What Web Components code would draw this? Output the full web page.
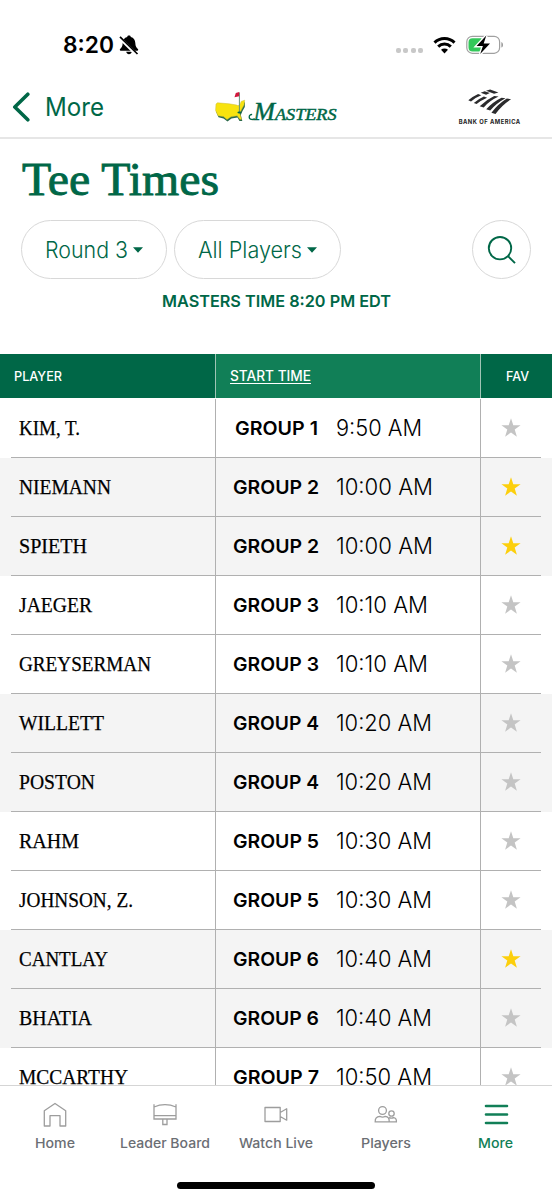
<!DOCTYPE html>
<html lang="en">
<head>
<meta charset="utf-8">
<title>Tee Times</title>
<style>
  :root {
    --green: #006747;
    --greenLight: #117f57;
    --line: #b0b0b0;
    --sans: Inter, "Liberation Sans", sans-serif;
    --serif: "Liberation Serif", serif;
  }
  body { margin: 0; background: #fff; }
</style>
</head>
<body>
<tee-times-app></tee-times-app>

<script>
// Base class: puts the template of the element in an open shadow root
class BaseElement extends HTMLElement {
  constructor() {
    super()
    this.attachShadow({ mode: 'open' })
  }
  connectedCallback() {
    if (this.shadowRoot.childNodes.length) return
    const template = document.createElement('template')
    template.innerHTML = this.getTemplate()
    this.shadowRoot.append(template.content.cloneNode(true))
    this.ready()
  }
  ready() {}
}

// One line of text, squeezed or stretched to the width attribute
class FitText extends BaseElement {
  getTemplate() {
    return /*html*/`
      <style>
        :host { display: block; flex: none; white-space: nowrap; }
        span { display: inline-block; transform-origin: 0 50%; }
      </style>
      <span><slot></slot></span>
    `
  }
  ready() {
    const width = Number(this.getAttribute('width'))
    const span = this.shadowRoot.querySelector('span')
    const natural = span.getBoundingClientRect().width
    this.style.width = width + 'px'
    if (natural) span.style.transform = `scaleX(${width / natural})`
  }
}
customElements.define('fit-text', FitText)

class StatusBar extends BaseElement {
  getTemplate() {
    return /*html*/`
      <style>
        :host {
          display: flex; align-items: center; box-sizing: border-box;
          height: 76px; padding: 14px 49px 0 63px;
          font: 600 22.5px/30px var(--sans); color: #000;
        }
        .bell { margin: 0 auto 0 5px; }
        .dots { display: flex; gap: 2.4px; margin: 11px 10px 0 0; }
        .dots i { width: 5px; height: 5px; border-radius: 2px; background: #c8c8c8; }
        .wifi { margin-right: 10px; }
        svg { display: block; }
      </style>
      <fit-text width="51">8:20</fit-text>
      <svg class="bell" width="20" height="20" viewBox="0 0 20 20">
        <path d="M10 .6c-1 0-1.600.5-1.800 1.400C5.200 2.800 3.800 5.100 3.700 8c-.1 3.300-1.200 4.600-2.600 6-.6.7-.3 1.700.6 1.700h16.600c.9 0 1.200-1 .6-1.700-1.400-1.400-2.500-2.700-2.600-6-.1-2.900-1.500-5.200-4.500-6C11.600 1.100 11 .6 10 .6zM7.200 16.800h5.600c-.3 1.500-1.400 2.400-2.800 2.400s-2.500-.9-2.800-2.400z"/>
        <path d="M1 3.200 17.500 19.500" stroke="#fff" stroke-width="3.200"/>
        <path d="M1 1.800 18.500 19" stroke="#000" stroke-width="1.700"/>
      </svg>
      <div class="dots"><i></i><i></i><i></i><i></i></div>
      <svg class="wifi" width="23" height="18" viewBox="0 0 23 18">
        <g fill="none" stroke="#000" stroke-width="3">
          <path d="M1.500 6.600a14.200 14.200 0 0 1 20 0"/>
          <path d="M5.200 10.600a9 9 0 0 1 12.600 0"/>
        </g>
        <path d="M11.500 17.500 8 13.800a5.100 5.100 0 0 1 7 0z"/>
      </svg>
      <svg width="37" height="20" viewBox="0 0 37 20">
        <rect x=".8" y="1.300" width="32.800" height="17" rx="5.500" fill="#fff" stroke="#a0a0a0" stroke-width="1.200"/>
        <path d="M35.300 7v5.600c1.200-.4 1.800-1.400 1.800-2.800S36.500 7.400 35.300 7z" fill="#a0a0a0"/>
        <path d="M6.500 3.200h9v13.200h-9a4 4 0 0 1-4-4V7.200a4 4 0 0 1 4-4z" fill="#33c85a"/>
        <path d="M20.300.6 10.600 11h6.300l-2.700 8L24 8.600h-6.300z" stroke="#fff" stroke-width="2.800"/>
        <path d="M20.300.6 10.600 11h6.300l-2.700 8L24 8.600h-6.300z"/>
      </svg>
    `
  }
}
customElements.define('status-bar', StatusBar)

class MastersLogo extends BaseElement {
  getTemplate() {
    return /*html*/`
      <style>
        :host { display: block; }
        svg { display: block; }
        text { font-family: var(--serif); font-style: italic; fill: var(--green); stroke: var(--green); stroke-width: .45; }
      </style>
      <svg width="124" height="36" viewBox="214 90 124 36">
        <path d="M217 106 229 107 237 108.500 245 103 244.800 108 242.500 112 240.800 116 242.300 122 239.500 122 237.500 118.400 231.500 119.500 227.500 122.500 223.500 119.500 218.500 118.200 216.200 113z" fill="#2c6a4b"/>
        <path d="M217.500 103.800 229 104.800 236.500 106 238 106.800 240 105.500 241.200 102.400 244.700 101.200 244 106 241.800 110 239.600 114.300 241.600 120.300 239.800 120.300 237.200 116.700 231 117.700 227 120.500 223.500 117.600 218 116.700 215.600 111.500 216 105z" fill="#f8e30f" stroke="#cbbd35" stroke-width=".5"/>
        <path d="M239.400 93.500v19.500" stroke="#63917a" stroke-width="1"/>
        <path d="M239.200 93 235.800 94 234.500 98.200 239.200 97.200z" fill="#d0173c"/>
        <ellipse cx="239.400" cy="113.400" rx="2" ry="1" fill="#006747"/>
        <path d="M254.500 119.300c-1.200 1.800-5.300 1.600-5.300-1.300 0-1.700 1.600-2.800 2.900-2.400" fill="none" stroke="#006747" stroke-width="1.300"/>
        <text x="253.500" y="120.800" font-size="25" textLength="21.500" lengthAdjust="spacingAndGlyphs">M</text>
        <text x="275" y="120.800" font-size="16" textLength="61.500" lengthAdjust="spacingAndGlyphs">ASTERS</text>
      </svg>
    `
  }
}
customElements.define('masters-logo', MastersLogo)

class BankLogo extends BaseElement {
  getTemplate() {
    return /*html*/`
      <style>
        :host { display: block; }
        svg { display: block; }
        text { font: 700 5.800px var(--sans); fill: #222; }
      </style>
      <svg width="63" height="36" viewBox="458 90 63 36">
        <g fill="#2b2b2d">
          <path d="M468.300 101.300q4.500-3.900 9.800-6.300l3.200 1.200q-6.200 2.400-10.300 6.200z"/>
          <path d="M473.800 104q4.800-4.200 10.100-6.500l3.200 1.200q-6.200 2.600-10.500 6.400z"/>
          <path d="M480.700 93.800l4-1.500 5.200 1.800-3.800 1.600z"/>
          <path d="M486 91.800l4.100-1.400 8.300 3.100-4.300 1.200z"/>
          <path d="M479.700 107.300q6.500-6.600 14.500-10.300l4.400.6q-8.800 4-14.900 10.800z"/>
          <path d="M486.200 110.300q6.800-7.400 15.300-11.500l4 .5q-9.200 5-15.300 12.300z"/>
          <path d="M491.400 113.700q7-8.900 15.400-14.100l4.300.6q-9.200 5.800-15.600 14.800z"/>
        </g>
        <text x="458.700" y="124.700" textLength="61.500" lengthAdjust="spacing">BANK OF AMERICA</text>
      </svg>
    `
  }
}
customElements.define('bank-logo', BankLogo)

class NavHeader extends BaseElement {
  getTemplate() {
    return /*html*/`
      <style>
        :host {
          display: grid; grid-template-columns: 1fr auto 1fr; align-items: center; box-sizing: border-box;
          height: 63px; padding: 0 31px 0 12px; border-bottom: 2px solid #e6e6e6;
        }
        .back { display: flex; align-items: center; gap: 14px; font: 400 25px/30px var(--sans); color: var(--green); }
        bank-logo { justify-self: end; }
        masters-logo { margin-left: 18px; }
      </style>
      <div class="back">
        <svg width="19" height="30" viewBox="0 0 19 30"><path d="M15.800 2.200 2.800 15l13 12.800" fill="none" stroke="#006747" stroke-width="3.600" stroke-linecap="round" stroke-linejoin="round"/></svg>
        <fit-text width="59">More</fit-text>
      </div>
      <masters-logo></masters-logo>
      <bank-logo></bank-logo>
    `
  }
}
customElements.define('nav-header', NavHeader)

class FilterPill extends BaseElement {
  getTemplate() {
    return /*html*/`
      <style>
        :host {
          display: flex; align-items: center; gap: 5px; box-sizing: border-box; height: 59px;
          padding: 0 23px 0 23px; border: 1.500px solid #d8d8d8; border-radius: 30px;
          font: 300 22.500px/30px var(--sans); color: var(--green);
        }
      </style>
      <slot></slot>
      <svg width="10" height="6" viewBox="0 0 10 6"><path d="M0 .2h10L5 5.800z" fill="#006747"/></svg>
    `
  }
}
customElements.define('filter-pill', FilterPill)

class PageFilters extends BaseElement {
  getTemplate() {
    return /*html*/`
      <style>
        :host { display: block; height: 215px; color: var(--green); }
        h1 { box-sizing: border-box; margin: 0; padding: 11px 0 0 21.500px; height: 81px; font: 400 46px/60px var(--serif); -webkit-text-stroke: .9px var(--green); }
        .filters { display: flex; gap: 7px; padding: 0 21px; }
        .search {
          display: grid; place-items: center; box-sizing: border-box; width: 59px; height: 59px;
          margin-left: auto; border: 1.500px solid #d8d8d8; border-radius: 50%;
        }
        .clock { display: flex; justify-content: center; margin: 10px 0 0 1px; font: 600 16.500px/24px var(--sans); }
      </style>
      <h1><fit-text width="197">Tee Times</fit-text></h1>
      <div class="filters">
        <filter-pill><fit-text width="83">Round 3</fit-text></filter-pill>
        <filter-pill><fit-text width="104">All Players</fit-text></filter-pill>
        <div class="search">
          <svg width="30" height="30" viewBox="0 0 30 30" fill="none" stroke="#006747" stroke-width="1.900"><circle cx="13" cy="13.200" r="11.200"/><path d="M21 21.200 28 28.200"/></svg>
        </div>
      </div>
      <div class="clock"><fit-text width="229">MASTERS TIME 8:20 PM EDT</fit-text></div>
    `
  }
}
customElements.define('page-filters', PageFilters)

class TableHead extends BaseElement {
  getTemplate() {
    return /*html*/`
      <style>
        :host {
          display: grid; grid-template-columns: 215px 264px 1fr; gap: 1px; height: 44px; margin-bottom: 1px; background: #9fc4b5;
          font: 500 13px/20px var(--sans); color: #fff;
        }
        div { display: flex; align-items: center; padding: 0 0 1px 13.500px; background: var(--green); }
        .sorted { padding: 0 0 0 14px; background: var(--greenLight); font-size: 14px; }
        .sorted u { display: block; border-bottom: 1px solid #fff; line-height: 15px; text-decoration: none; }
        .fav { padding-left: 25px; }
      </style>
      <div><fit-text width="48">PLAYER</fit-text></div>
      <div class="sorted"><u><fit-text width="81">START TIME</fit-text></u></div>
      <div class="fav"><fit-text width="23">FAV</fit-text></div>
    `
  }
}
customElements.define('table-head', TableHead)

class TeeRow extends BaseElement {
  getTemplate() {
    const get = name => this.getAttribute(name)
    return /*html*/`
      <style>
        :host { display: block; height: 59px; padding: 0 11px; color: #000; }
        :host([shaded]) { background: #f4f4f4; }
        .row { display: grid; grid-template-columns: 204px 264px 1fr; height: 59px; gap: 1px; box-sizing: border-box; border-bottom: 1px solid var(--line); }
        .row > div { display: flex; align-items: center; box-sizing: border-box; height: 59px; padding-bottom: 2px; }
        .name { padding-left: 8px; font: 400 21px/30px var(--serif); -webkit-text-stroke: .25px #000; }
        .slot { box-shadow: -1px 0 var(--line); }
        .group { display: flex; justify-content: center; width: 87px; margin: 2px 0 0 16.500px; font: 600 19px/30px var(--sans); }
        .time { margin-left: 16px; font: 300 22.500px/30px var(--sans); }
        .row > .fav { box-shadow: -1px 0 var(--line); padding-left: 20px; }
        svg { fill: #c4c4c4; }
        :host([fav]) svg { fill: #fccf0c; }
      </style>
      <div class="row">
        <div class="name"><fit-text width="${get('name-width')}">${get('name')}</fit-text></div>
        <div class="slot">
          <div class="group"><fit-text width="${get('group') === '1' ? 83 : 86}">GROUP ${get('group')}</fit-text></div>
          <div class="time"><fit-text width="${get('time-width')}">${get('time')}</fit-text></div>
        </div>
        <div class="fav">
          <svg width="20" height="20" viewBox="0 0 20 20"><path d="M10 .3l2.300 7h7.300l-5.900 4.300 2.200 7.100L10 14.400l-5.900 4.300 2.200-7.100L.4 7.300h7.300z"/></svg>
        </div>
      </div>
    `
  }
}
customElements.define('tee-row', TeeRow)

class TabItem extends BaseElement {
  getTemplate() {
    return /*html*/`
      <style>
        :host {
          display: flex; flex-direction: column; align-items: center; gap: 4px; flex: 1 1 0; min-width: 0;
          font: 500 13px/20px var(--sans); color: #6b6e74;
        }
        :host([active]) { color: var(--greenLight); }
      </style>
      <slot name="icon"></slot>
      <slot></slot>
    `
  }
}
customElements.define('tab-item', TabItem)

class TabBar extends BaseElement {
  getTemplate() {
    return /*html*/`
      <style>
        :host { display: flex; flex-direction: column; align-items: center; justify-content: space-between; box-sizing: border-box; height: 115px; padding: 14px 0 11px; border-top: 1px solid #d5d5d5; background: #fff; }
        .tabs { display: flex; width: 551px; margin-right: 1px; }
        .home { width: 198px; height: 7px; border-radius: 4px; background: #000; }
        svg { display: block; width: 26px; height: 29px; fill: none; stroke: #9d9d9d; stroke-width: 1.300; }
      </style>
      <div class="tabs">
        <tab-item>
          <svg slot="icon" viewBox="0 0 26 29"><path d="M2.300 26V10.800L13 3.500l10.700 7.300V26h-5.700V15.700H8V26z" stroke-linejoin="round"/></svg>
          <fit-text width="40">Home</fit-text>
        </tab-item>
        <tab-item>
          <svg slot="icon" viewBox="0 0 26 29"><path d="M2 4.300V19h22V4.300M2 7q11-4.600 22 0M2 15.700h22M10.800 19v5.500h4.200V19"/></svg>
          <fit-text width="90">Leader Board</fit-text>
        </tab-item>
        <tab-item>
          <svg slot="icon" viewBox="0 0 26 29"><path d="M2 7.500h15.200v14H2zM17.200 12.500l6.500-3.700v11.400l-6.500-3.700z" stroke-linejoin="round"/></svg>
          <fit-text width="74">Watch Live</fit-text>
        </tab-item>
        <tab-item>
          <svg slot="icon" viewBox="0 0 26 29"><circle cx="9.500" cy="10.500" r="3.900"/><circle cx="18.500" cy="13.500" r="2.700"/><path d="M16.200 21.800H2.200c-.2-4 1.900-5.200 4.600-5.400 1.900 1 3.700 1 5.500 0 2.700.2 4.100 2 3.900 5.400h7.200c.2-2.600-.8-4-2.900-4.200-1.200.6-2.800.6-4.500 0"/></svg>
          <fit-text width="50">Players</fit-text>
        </tab-item>
        <tab-item active>
          <svg slot="icon" viewBox="0 0 26 29" style="stroke:#117f57;stroke-width:2.600;stroke-linecap:round"><path d="M3 6h21M3 14.500h21M3 23h21"/></svg>
          <fit-text width="35">More</fit-text>
        </tab-item>
      </div>
      <div class="home"></div>
    `
  }
}
customElements.define('tab-bar', TabBar)

// name, name width, group, time, time width, favourite
const teeTimes = [
  ['KIM, T.', 61, 1, '9:50 AM', 86],
  ['NIEMANN', 92, 2, '10:00 AM', 97, true],
  ['SPIETH', 68, 2, '10:00 AM', 97, true],
  ['JAEGER', 73, 3, '10:10 AM', 92],
  ['GREYSERMAN', 132, 3, '10:10 AM', 92],
  ['WILLETT', 85, 4, '10:20 AM', 96],
  ['POSTON', 76, 4, '10:20 AM', 96],
  ['RAHM', 60, 5, '10:30 AM', 96],
  ['JOHNSON, Z.', 114, 5, '10:30 AM', 96],
  ['CANTLAY', 89, 6, '10:40 AM', 96, true],
  ['BHATIA', 73, 6, '10:40 AM', 96],
  ['MCCARTHY', 109, 7, '10:50 AM', 96]
]

class TeeTimesApp extends BaseElement {
  getTemplate() {
    // players of the same group share a background
    const rows = teeTimes.map(([name, nameWidth, group, time, timeWidth, fav]) => `
      <tee-row name="${name}" name-width="${nameWidth}" group="${group}" time="${time}" time-width="${timeWidth}"
        ${group % 2 ? '' : 'shaded'} ${fav ? 'fav' : ''}></tee-row>
    `).join('')
    return /*html*/`
      <style>
        :host { display: flex; flex-direction: column; width: 552px; height: 1200px; overflow: hidden; background: #fff; }
        status-bar, nav-header, page-filters, table-head, tab-bar { flex: none; }
        main { flex: 1 1 0; min-height: 0; overflow: hidden; }
      </style>
      <status-bar></status-bar>
      <nav-header></nav-header>
      <page-filters></page-filters>
      <table-head></table-head>
      <main>${rows}</main>
      <tab-bar></tab-bar>
    `
  }
}
customElements.define('tee-times-app', TeeTimesApp)
</script>
</body>
</html>
